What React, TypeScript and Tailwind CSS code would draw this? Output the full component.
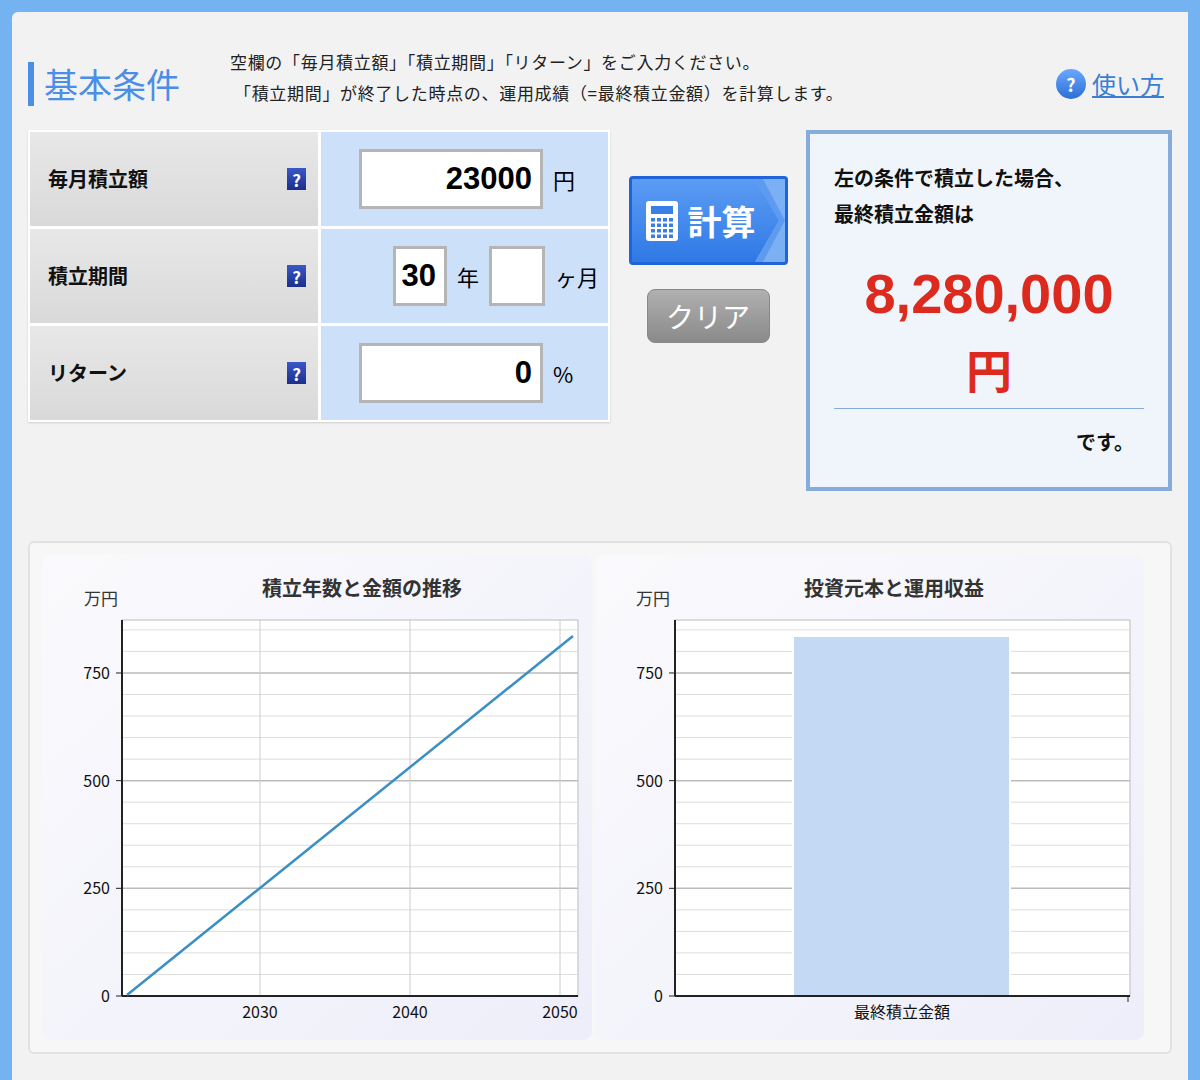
import React from 'react';

const font = { fontFamily: '"Noto Sans CJK JP", "Noto Sans", sans-serif' };
const num = { fontFamily: '"Liberation Sans", sans-serif' };

function Help() {
    return (
        <span className="flex h-[22px] w-[19px] items-center justify-center bg-gradient-to-b from-[#3a58c8] to-[#1c2f8a] text-[17px] font-bold leading-none text-white">?</span>
    );
}

function Label({ text }: { text: string }) {
    return (
        <div className="flex items-center justify-between bg-gradient-to-b from-[#e8e8e8] to-[#d9d9d9] pl-[18px] pr-[12px]">
            <span className="text-[20px] font-bold text-[#111]">{text}</span>
            <Help />
        </div>
    );
}

function Box({ value, w }: { value: string; w: string }) {
    return (
        <div className={`flex h-[60px] items-center justify-end border-[3px] border-[#b5b5b5] bg-white pr-[8px] text-[31px] font-bold text-black ${w}`} style={num}>{value}</div>
    );
}

function Grid({ x0, x1 }: { x0: number; x1: number }) {
    const lines = [];
    for (let v = 0; v <= 850; v += 50) {
        const y = 998 - v * 0.4307;
        lines.push(<line key={v} x1={x0} x2={x1} y1={y} y2={y} stroke={v % 250 === 0 ? '#bbb' : '#ddd'} strokeWidth={v % 250 === 0 ? 1.5 : 1} />);
    }
    return <>{lines}</>;
}

function Axis({ x0 }: { x0: number }) {
    return (
        <>
            {[0, 250, 500, 750].map((v) => {
                const y = 998 - v * 0.4307;
                return (
                    <g key={v}>
                        <line x1={x0 - 6} x2={x0} y1={y} y2={y} stroke="#222" />
                        <text x={x0 - 12} y={y + 6} textAnchor="end" fontSize="16" fill="#111">{v}</text>
                    </g>
                );
            })}
        </>
    );
}

function LineChart() {
    return (
        <svg width="550" height="485" viewBox="42 557 550 485" style={font}>
            <text x="84" y="607" fontSize="17" fill="#333">万円</text>
            <text x="362" y="598" fontSize="20" fontWeight="bold" fill="#333" textAnchor="middle">積立年数と金額の推移</text>
            <rect x="122" y="622" width="456" height="376" fill="#fff" stroke="#bbb" />
            <Grid x0={122} x1={578} />
            {[260, 410, 560].map((x, i) => (
                <g key={x}>
                    <line x1={x} x2={x} y1={622} y2={998} stroke="#ccc" />
                    <text x={x} y={1020} textAnchor="middle" fontSize="16" fill="#111">{2030 + i * 10}</text>
                </g>
            ))}
            <line x1="122" x2="122" y1="622" y2="998" stroke="#222" strokeWidth="2" />
            <line x1="122" x2="578" y1="998" y2="998" stroke="#222" strokeWidth="2" />
            <Axis x0={122} />
            <line x1="127" y1="997" x2="573" y2="638" stroke="#3a8fc4" strokeWidth="2.5" />
        </svg>
    );
}

function BarChart() {
    return (
        <svg width="548" height="485" viewBox="596 557 548 485" style={font}>
            <text x="636" y="607" fontSize="17" fill="#333">万円</text>
            <text x="894" y="598" fontSize="20" fontWeight="bold" fill="#333" textAnchor="middle">投資元本と運用収益</text>
            <rect x="675" y="622" width="455" height="376" fill="#fff" stroke="#bbb" />
            <Grid x0={675} x1={1130} />
            <rect x="793" y="638" width="217" height="360" fill="#c3d9f4" stroke="#fff" strokeWidth="2" />
            <line x1="675" x2="675" y1="622" y2="998" stroke="#222" strokeWidth="2" />
            <line x1="675" x2="1130" y1="998" y2="998" stroke="#222" strokeWidth="2" />
            <line x1="1128" x2="1128" y1="998" y2="1004" stroke="#222" />
            <Axis x0={675} />
            <text x="902" y="1020" textAnchor="middle" fontSize="16" fill="#111">最終積立金額</text>
        </svg>
    );
}

export default function App() {
    return (
        <div className="h-[1080px] w-[1200px] overflow-hidden bg-[#74b2f2] pl-[12px] pr-[12px] pt-[12px]" style={font}>
            <div className="h-full rounded-tl-[6px] bg-[#f2f2f2] pl-[16px] pr-[16px]">
                {/* header */}
                <div className="flex h-[118px] items-start pt-[34px]">
                    <div className="mt-[16px] flex items-center">
                        <div className="h-[44px] w-[6px] bg-[#4a8ee6]" />
                        <h1 className="ml-[10px] text-[34px] leading-none text-[#4a8ee6]">基本条件</h1>
                    </div>
                    <div className="ml-[50px] text-[17px] leading-[31px] tracking-[0.04em] text-[#222]">
                        <div>空欄の「毎月積立額」「積立期間」「リターン」をご入力ください。</div>
                        <div className="pl-[4px]">「積立期間」が終了した時点の、運用成績（=最終積立金額）を計算します。</div>
                    </div>
                    <div className="ml-auto mr-[8px] mt-[20px] flex items-center gap-[6px]">
                        <span className="flex h-[30px] w-[30px] items-center justify-center rounded-full bg-gradient-to-b from-[#6aa8ff] to-[#2a6fd6] text-[18px] font-bold text-white">?</span>
                        <span className="text-[24px] text-[#3a7fd6] underline">使い方</span>
                    </div>
                </div>

                {/* top section */}
                <div className="flex items-start">
                    <div className="grid w-[582px] grid-cols-[288px_1fr] gap-[3px] bg-white p-[2px] shadow-[0_1px_2px_rgba(0,0,0,0.15)]">
                        <Label text="毎月積立額" />
                        <div className="flex h-[94px] items-center bg-[#cde0fa] pl-[38px]">
                            <Box value="23000" w="w-[184px]" />
                            <span className="ml-[10px] text-[22px]">円</span>
                        </div>
                        <Label text="積立期間" />
                        <div className="flex h-[94px] items-center bg-[#cde0fa] pl-[72px]">
                            <Box value="30" w="w-[54px]" />
                            <span className="ml-[10px] text-[22px]">年</span>
                            <div className="ml-[10px] h-[60px] w-[56px] border-[3px] border-[#b5b5b5] bg-white" />
                            <span className="ml-[10px] text-[22px]">ヶ月</span>
                        </div>
                        <Label text="リターン" />
                        <div className="flex h-[94px] items-center bg-[#cde0fa] pl-[38px]">
                            <Box value="0" w="w-[184px]" />
                            <span className="ml-[10px] text-[22px]">%</span>
                        </div>
                    </div>

                    <div className="ml-[18px] mt-[46px] flex w-[160px] flex-col items-center">
                        <div className="relative flex h-[89px] w-[159px] items-center overflow-hidden rounded-[4px] border-[3px] border-[#1f64d8] bg-gradient-to-b from-[#5b9cf3] to-[#2f79e6] pl-[12px]">
                            <svg className="absolute right-0 top-0" width="30" height="83" viewBox="0 0 30 83">
                                <polygon points="0,0 30,0 30,83 0,83 24,41.5" fill="#7cb0f5" />
                                <polygon points="0,0 8,0 30,41.5 8,83 0,83 24,41.5" fill="#5d9bf0" />
                            </svg>
                            <svg width="36" height="44" viewBox="0 0 36 44">
                                <rect x="2" y="2" width="32" height="40" rx="3" fill="#fff" />
                                <rect x="7" y="7" width="22" height="8" fill="#3a7fe8" />
                                {[0, 1, 2, 3].map((r) => [0, 1, 2, 3].map((c) => (
                                    <rect key={`${r}${c}`} x={7 + c * 6} y={19 + r * 5.5} width="4" height="3.5" fill="#3a7fe8" />
                                )))}
                            </svg>
                            <span className="relative ml-[8px] text-[34px] font-bold text-white">計算</span>
                        </div>
                        <div className="mt-[24px] flex h-[54px] w-[123px] items-center justify-center rounded-[8px] border border-[#888] bg-gradient-to-b from-[#b0b0b0] to-[#8a8a8a] text-[28px] text-white">クリア</div>
                    </div>

                    <div className="ml-[18px] w-[366px] border-[4px] border-[#86acdc] bg-[#f0f5fb] px-[24px] pb-[30px] pt-[26px]">
                        <div className="text-[20px] font-bold leading-[36px] text-[#111]">左の条件で積立した場合、<br />最終積立金額は</div>
                        <div className="mt-[34px] text-center text-[56px] font-bold leading-[56px] text-[#dd2a1e]" style={num}>8,280,000</div>
                        <div className="mt-[20px] text-center text-[46px] font-bold leading-[52px] text-[#dd2a1e]">円</div>
                        <div className="mt-[14px] border-t border-[#86acdc]" />
                        <div className="mt-[18px] pr-[10px] text-right text-[20px] font-bold text-[#111]">です。</div>
                    </div>
                </div>

                {/* charts */}
                <div className="mt-[50px] flex gap-[4px] rounded-[6px] border-[2px] border-[#e2e2e2] bg-[#f7f7f7] px-[12px] pb-[12px] pt-[12px]">
                    <div className="rounded-[8px] bg-gradient-to-br from-[#fafafd] to-[#eeeefa]"><LineChart /></div>
                    <div className="rounded-[8px] bg-gradient-to-br from-[#fafafd] to-[#eeeefa]"><BarChart /></div>
                </div>
            </div>
        </div>
    );
}
